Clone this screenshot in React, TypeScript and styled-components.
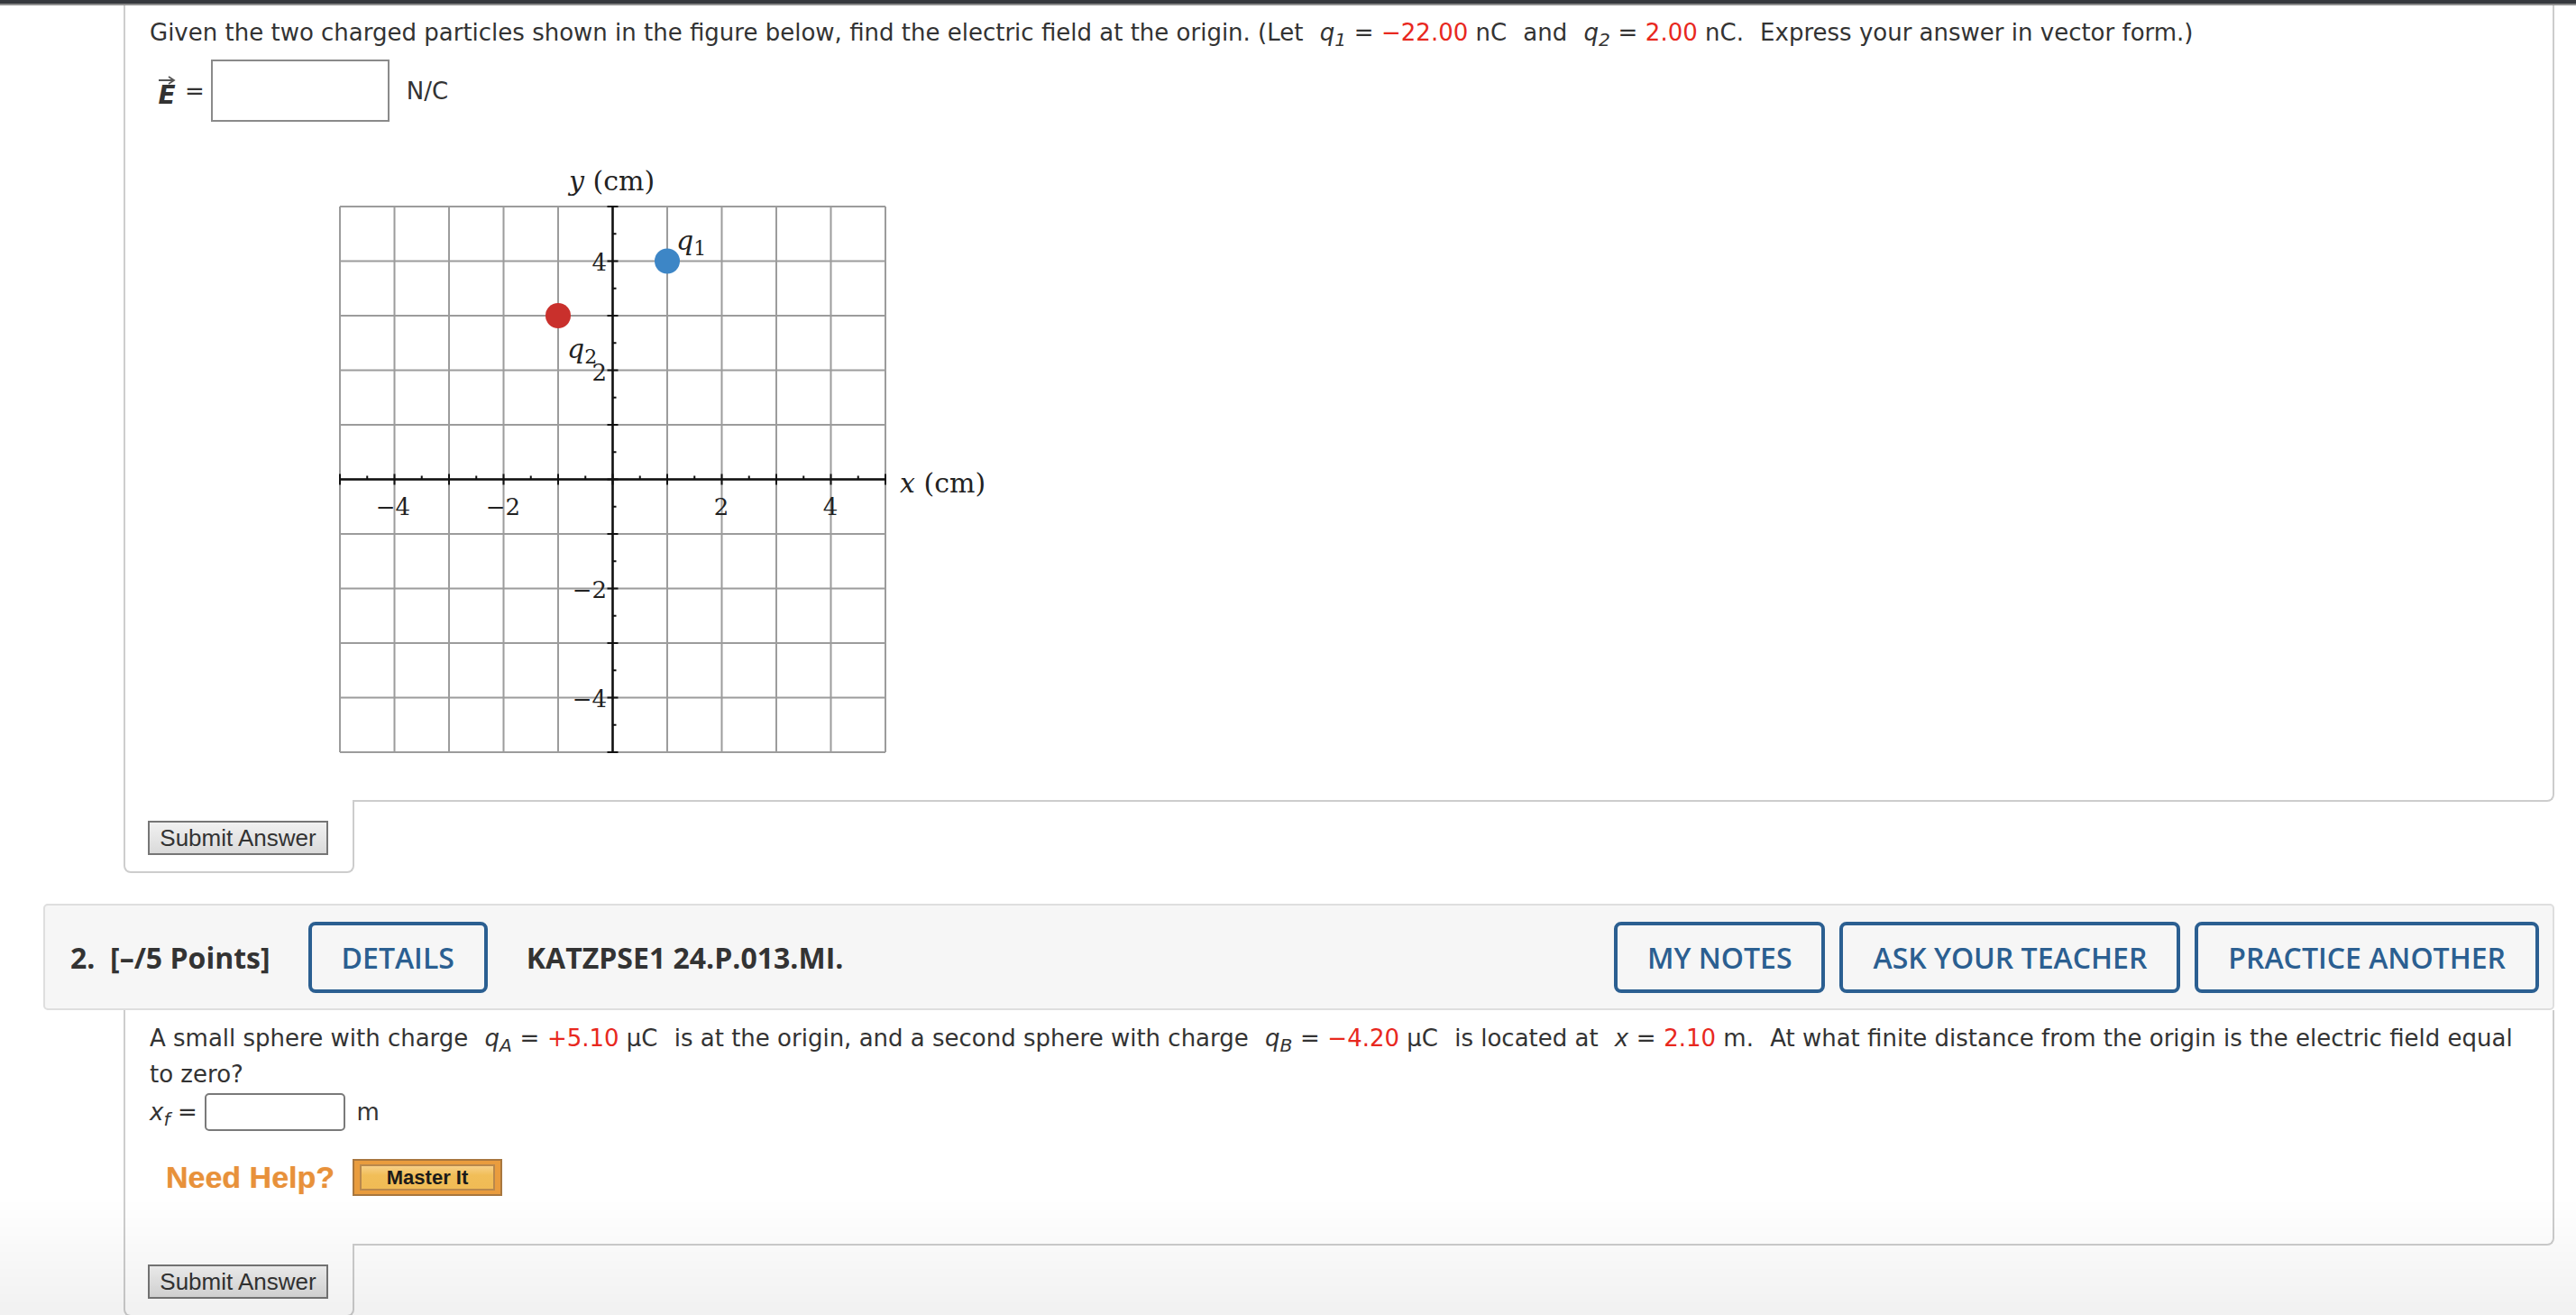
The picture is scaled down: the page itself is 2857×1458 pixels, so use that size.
import styled, { createGlobalStyle } from "styled-components";

const GlobalStyle = createGlobalStyle`
  html, body {
    margin: 0;
    padding: 0;
    background: #fff;
  }
  body {
    font-family: "DejaVu Sans", Verdana, sans-serif;
    color: #333;
  }
`;

const TopStrip = styled.div`
  height: 4px;
  background: #36393e;
  border-bottom: 2px solid #8d8d8d;
`;

const Page = styled.div`
  padding: 0 24px 0 48px;
`;

const QuestionBody = styled.div<{ $top: number; $bottom: number }>`
  margin-left: 89px;
  padding: ${(p) => p.$top}px 27px ${(p) => p.$bottom}px 27px;
  border: 2px solid #cdcdcd;
  border-top: none;
  border-bottom-right-radius: 8px;
  font-size: 26px;
  line-height: 40px;
`;

const Prompt = styled.p`
  margin: 0;
`;

const Math = styled.span`
  margin: 0 0.7em;
`;

const Eq = styled.span`
  margin: 0 0.33em;
`;

const Var = styled.i`
  font-style: italic;
`;

const Sub = styled.sub`
  font-size: 78%;
  font-style: italic;
  vertical-align: -0.3em;
  line-height: 0;
`;

const Red = styled.span`
  color: #e8281e;
`;

const AnswerRow = styled.div<{ $indent: number; $mt: number }>`
  display: flex;
  align-items: center;
  margin-top: ${(p) => p.$mt}px;
  padding-left: ${(p) => p.$indent}px;
`;

const VecE = styled.span`
  display: inline-flex;
  flex-direction: column;
  align-items: center;
  font-weight: 700;
  font-style: italic;
  font-size: 28px;
  line-height: 24px;
  margin-right: 10px;
`;

const Equals = styled.span`
  margin-right: 7px;
`;

const BigInput = styled.div`
  width: 198px;
  height: 69px;
  box-sizing: border-box;
  border: 2px solid #8a8a8a;
  background: #fff;
`;

const SmallInput = styled.div`
  width: 156px;
  height: 42px;
  box-sizing: border-box;
  border: 2px solid #7a7a7a;
  border-radius: 5px;
  background: #fff;
`;

const Unit = styled.span<{ $ml: number }>`
  margin-left: ${(p) => p.$ml}px;
`;

const Figure = styled.div`
  margin-top: 30px;
  padding-left: 174px;
  line-height: 0;
`;

const SubmitTab = styled.div`
  position: relative;
  margin-left: 89px;
  margin-top: -2px;
  width: 256px;
  box-sizing: border-box;
  padding: 23px 0 18px 25px;
  border: 2px solid #cdcdcd;
  border-top: none;
  border-radius: 0 0 8px 8px;
  background: #fff;
`;

const SubmitButton = styled.button`
  display: block;
  width: 200px;
  height: 38px;
  padding: 0;
  font-family: "Liberation Sans", Arial, sans-serif;
  font-size: 26px;
  color: #333;
  background: linear-gradient(#f1f1f1, #dadada);
  border: 2px solid #767676;
  border-radius: 0;
`;

const QHeader = styled.div`
  margin-top: 34px;
  height: 118px;
  box-sizing: border-box;
  display: flex;
  align-items: center;
  padding: 0 15px 0 28px;
  background: #f6f6f6;
  border: 2px solid #dedede;
  border-radius: 5px;
  font-family: "Open Sans", sans-serif;
  font-size: 32px;
  color: #333;
`;

const HeaderText = styled.span<{ $ml?: number }>`
  font-weight: 700;
  margin-left: ${(p) => p.$ml ?? 0}px;
  white-space: pre;
`;

const OutlineButton = styled.button<{ $ml?: number }>`
  height: 79px;
  margin-left: ${(p) => p.$ml ?? 0}px;
  padding: 0 33px;
  border: 4px solid #2b5f91;
  border-radius: 8px;
  background: transparent;
  color: #2b5f91;
  font-family: "Open Sans", sans-serif;
  font-size: 32px;
  font-weight: 600;
`;

const RightGroup = styled.div`
  margin-left: auto;
  display: flex;
  gap: 16px;
`;

const HelpRow = styled.div`
  display: flex;
  align-items: center;
  gap: 20px;
  margin: 31px 0 0 18px;
`;

const NeedHelp = styled.span`
  font-family: "Liberation Sans", Arial, sans-serif;
  font-weight: 700;
  font-size: 34px;
  line-height: 41px;
  color: #e8913a;
  text-shadow: 0 0 1px rgba(232, 145, 58, 0.6);
`;

const MasterIt = styled.button`
  width: 166px;
  height: 41px;
  box-sizing: border-box;
  padding: 4px 6px 4px 6px;
  background: #e99c3e;
  border: 2px solid #a8773f;
  border-radius: 0;
  display: flex;
`;

const MasterInner = styled.span`
  flex: 1;
  display: flex;
  align-items: center;
  justify-content: center;
  border: 2px solid #b9884c;
  background: linear-gradient(#f7d088, #f1be58 40%, #f0bb55);
  font-family: "Liberation Sans", Arial, sans-serif;
  font-weight: 700;
  font-size: 22px;
  color: #1a1a1a;
`;

const BottomShade = styled.div`
  position: fixed;
  left: 0;
  right: 0;
  bottom: 0;
  height: 130px;
  pointer-events: none;
  background: linear-gradient(rgba(0, 0, 0, 0), rgba(0, 0, 0, 0.055));
`;

const C = 60.5;
const px = (x: number) => 37 + (x + 5) * C;
const py = (y: number) => 64 + (5 - y) * C;

function ChargeGraph() {
  const lines = Array.from({ length: 11 }, (_, i) => i - 5);
  const halves = Array.from({ length: 21 }, (_, i) => (i - 10) / 2);
  const serif = '"DejaVu Serif", "Liberation Serif", serif';
  return (
    <svg width={760} height={690} viewBox="0 0 760 690" fontFamily={serif}>
      {lines.map((v) => (
        <g key={v} stroke="#9c9c9c" strokeWidth={2}>
          <line x1={px(v)} y1={py(5)} x2={px(v)} y2={py(-5)} />
          <line x1={px(-5)} y1={py(v)} x2={px(5)} y2={py(v)} />
        </g>
      ))}
      <g stroke="#111" strokeWidth={2.5}>
        <line x1={px(-5)} y1={py(0)} x2={px(5)} y2={py(0)} />
        <line x1={px(0)} y1={py(5)} x2={px(0)} y2={py(-5)} />
      </g>
      <g stroke="#111" strokeWidth={2}>
        {halves.map((h) => {
          const big = Number.isInteger(h);
          const l = big ? 6 : 4;
          return (
            <g key={h}>
              <line x1={px(h)} y1={py(0) - l} x2={px(h)} y2={py(0) + (big ? l : 0)} />
              <line x1={px(0) - (big ? l : 0)} y1={py(h)} x2={px(0) + l} y2={py(h)} />
            </g>
          );
        })}
      </g>
      <g fontSize={30} fill="#222">
        <text x={291} y={46}>
          <tspan fontStyle="italic">y</tspan> (cm)
        </text>
        <text x={658} y={381}>
          <tspan fontStyle="italic">x</tspan> (cm)
        </text>
      </g>
      <g fontSize={26} fill="#222">
        <text x={333} y={135} textAnchor="end">4</text>
        <text x={333} y={257} textAnchor="end">2</text>
        <text x={333} y={498} textAnchor="end">−2</text>
        <text x={333} y={619} textAnchor="end">−4</text>
        <text x={96} y={406} textAnchor="middle">−4</text>
        <text x={218} y={406} textAnchor="middle">−2</text>
        <text x={460} y={406} textAnchor="middle">2</text>
        <text x={581} y={406} textAnchor="middle">4</text>
      </g>
      <g fontSize={30} fill="#222" fontStyle="italic">
        <text x={410} y={112}>
          q<tspan fontSize={22} fontStyle="normal" dy={6}>1</tspan>
        </text>
        <text x={289} y={232}>
          q<tspan fontSize={22} fontStyle="normal" dy={6}>2</tspan>
        </text>
      </g>
      <circle cx={px(1)} cy={py(4)} r={14} fill="#3d86c6" />
      <circle cx={px(-1)} cy={py(3)} r={14} fill="#c9302c" />
    </svg>
  );
}

function Arrow() {
  return (
    <svg width="20" height="10" viewBox="0 0 20 10">
      <path d="M1 5 H17 M12 1 L18 5 L12 9" fill="none" stroke="#555" strokeWidth="1.8" />
    </svg>
  );
}

export default function App() {
  return (
    <>
      <GlobalStyle />
      <TopStrip />
      <Page>
        <QuestionBody $top={10} $bottom={32}>
          <Prompt>
            Given the two charged particles shown in the figure below, find the electric
            field at the origin. (Let
            <Math>
              <Var>q</Var>
              <Sub>1</Sub>
              <Eq>=</Eq>
              <Red>−22.00</Red> nC
            </Math>
            and
            <Math>
              <Var>q</Var>
              <Sub>2</Sub>
              <Eq>=</Eq>
              <Red>2.00</Red> nC.
            </Math>
            Express your answer in vector form.)
          </Prompt>
          <AnswerRow $indent={9} $mt={10}>
            <VecE>
              <Arrow />
              E
            </VecE>
            <Equals>=</Equals>
            <BigInput />
            <Unit $ml={19}>N/C</Unit>
          </AnswerRow>
          <Figure>
            <ChargeGraph />
          </Figure>
        </QuestionBody>
        <SubmitTab>
          <SubmitButton>Submit Answer</SubmitButton>
        </SubmitTab>

        <QHeader>
          <HeaderText>2.  [–/5 Points]</HeaderText>
          <OutlineButton $ml={42}>DETAILS</OutlineButton>
          <HeaderText $ml={43}>KATZPSE1 24.P.013.MI.</HeaderText>
          <RightGroup>
            <OutlineButton>MY NOTES</OutlineButton>
            <OutlineButton>ASK YOUR TEACHER</OutlineButton>
            <OutlineButton>PRACTICE ANOTHER</OutlineButton>
          </RightGroup>
        </QHeader>
        <QuestionBody $top={11} $bottom={53}>
          <Prompt>
            A small sphere with charge
            <Math>
              <Var>q</Var>
              <Sub>A</Sub>
              <Eq>=</Eq>
              <Red>+5.10</Red> μC
            </Math>
            is at the origin, and a second sphere with charge
            <Math>
              <Var>q</Var>
              <Sub>B</Sub>
              <Eq>=</Eq>
              <Red>−4.20</Red> μC
            </Math>
            is located at
            <Math>
              <Var>x</Var>
              <Eq>=</Eq>
              <Red>2.10</Red> m.
            </Math>
            At what finite distance from the origin is the electric field equal to zero?
          </Prompt>
          <AnswerRow $indent={0} $mt={1}>
            <span>
              <Var>x</Var>
              <Sub>f</Sub>
              <Eq>=</Eq>
            </span>
            <SmallInput />
            <Unit $ml={12}>m</Unit>
          </AnswerRow>
          <HelpRow>
            <NeedHelp>Need Help?</NeedHelp>
            <MasterIt>
              <MasterInner>Master It</MasterInner>
            </MasterIt>
          </HelpRow>
        </QuestionBody>
        <SubmitTab>
          <SubmitButton>Submit Answer</SubmitButton>
        </SubmitTab>
      </Page>
      <BottomShade />
    </>
  );
}
